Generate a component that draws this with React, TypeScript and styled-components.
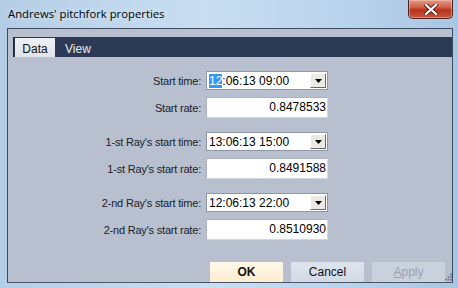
import React from "react";
import styled, { createGlobalStyle } from "styled-components";

const GlobalStyle = createGlobalStyle`
  html, body {
    margin: 0;
    padding: 0;
    width: 458px;
    height: 288px;
    overflow: hidden;
  }
  body {
    font-family: "Liberation Sans", Arial, sans-serif;
    font-size: 11px;
    color: #000;
  }
`;

const rows = [
  { label: "Start time:", kind: "combo", value: "12:06:13 09:00", highlight: true },
  { label: "Start rate:", kind: "rate", value: "0.8478533" },
  { label: "1-st Ray's start time:", kind: "combo", value: "13:06:13 15:00" },
  { label: "1-st Ray's start rate:", kind: "rate", value: "0.8491588" },
  { label: "2-nd Ray's start time:", kind: "combo", value: "12:06:13 22:00" },
  { label: "2-nd Ray's start rate:", kind: "rate", value: "0.8510930" }
];

export default function App() {
  return (
    <>
      <GlobalStyle />
      <Window>
        <TitleBar>
          <Title>Andrews' pitchfork properties</Title>
          <CloseButton>
            <svg width="14" height="11" viewBox="0 0 14 11">
              <path
                d="M2 1 L12 10 M12 1 L2 10"
                stroke="#5a1e18"
                strokeWidth="4"
                strokeLinecap="square"
              />
              <path
                d="M2 1 L12 10 M12 1 L2 10"
                stroke="#fff"
                strokeWidth="2.2"
                strokeLinecap="square"
              />
            </svg>
          </CloseButton>
        </TitleBar>
        <Client>
          <TabStrip>
            <Tab $active>Data</Tab>
            <Tab>View</Tab>
          </TabStrip>
          <Form>
            {rows.map((r, i) => (
              <Row key={i} $rate={r.kind === "rate"} $groupStart={i > 0 && i % 2 === 0}>
                <Label>{r.label}</Label>
                {r.kind === "combo" ? (
                  <Combo>
                    <ComboText>
                      {r.highlight ? (
                        <>
                          <Sel>12</Sel>
                          {r.value.slice(2)}
                        </>
                      ) : (
                        r.value
                      )}
                    </ComboText>
                    <DropButton>
                      <svg width="7" height="4" viewBox="0 0 7 4">
                        <path d="M0 0 H7 L3.5 4 Z" fill="#000" />
                      </svg>
                    </DropButton>
                  </Combo>
                ) : (
                  <RateBox>{r.value}</RateBox>
                )}
              </Row>
            ))}
          </Form>
          <ButtonBar>
            <Button $default>OK</Button>
            <Button>Cancel</Button>
            <Button $disabled>
              <u>A</u>pply
            </Button>
            <Grip>
              <svg width="8" height="8" viewBox="0 0 8 8">
                <g fill="#6f7c90">
                  <rect x="6" y="0" width="2" height="2" />
                  <rect x="3" y="3" width="2" height="2" />
                  <rect x="6" y="3" width="2" height="2" />
                  <rect x="0" y="6" width="2" height="2" />
                  <rect x="3" y="6" width="2" height="2" />
                  <rect x="6" y="6" width="2" height="2" />
                </g>
              </svg>
            </Grip>
          </ButtonBar>
        </Client>
      </Window>
    </>
  );
}

const Window = styled.div`
  width: 458px;
  height: 288px;
  display: flex;
  flex-direction: column;
  background: linear-gradient(90deg, #b4cde6 0%, #c9def1 45%, #b9d3ec 75%, #a9c6e2 100%);
  box-sizing: border-box;
  padding: 0 5px 5px 7px;
`;

const TitleBar = styled.div`
  height: 28px;
  display: flex;
  align-items: flex-start;
  justify-content: space-between;
  flex-shrink: 0;
`;

const Title = styled.div`
  font-family: "Open Sans", "Noto Sans", sans-serif;
  font-size: 11.3px;
  color: #000;
  margin-top: 6px;
  margin-left: 1px;
  text-shadow: 0 0 6px #e8f2fc;
`;

const CloseButton = styled.div`
  width: 45px;
  height: 19px;
  box-sizing: border-box;
  border: 1px solid #4e2420;
  border-top: none;
  border-radius: 0 0 5px 5px;
  background: linear-gradient(180deg, #e39a88 0%, #d05c45 42%, #b8321f 55%, #c9553b 100%);
  box-shadow: inset 0 0 0 1px rgba(255, 210, 200, 0.45);
  display: flex;
  align-items: center;
  justify-content: center;
`;

const Client = styled.div`
  flex: 1;
  display: flex;
  flex-direction: column;
  border: 1px solid #3e4c63;
  border-bottom-color: #4a566a;
  background: #b8c0cf;
  min-height: 0;
`;

const TabStrip = styled.div`
  margin-top: 8px;
  margin-left: 5px;
  height: 20px;
  background: #2c3a55;
  border-left: 1px solid #1a2438;
  display: flex;
  align-items: stretch;
  padding-left: 1px;
`;

const Tab = styled.div<{ $active?: boolean }>`
  width: ${p => (p.$active ? "40px" : "auto")};
  padding: ${p => (p.$active ? "2px 0 0" : "2px 0 0 10px")};
  margin-top: 1px;
  display: flex;
  align-items: center;
  justify-content: center;
  font-size: 12px;
  color: ${p => (p.$active ? "#111" : "#e8ecf2")};
  background: ${p => (p.$active ? "linear-gradient(180deg, #eef1f5 0%, #dfe4eb 100%)" : "transparent")};
`;

const Form = styled.div`
  flex: 1;
  display: flex;
  flex-direction: column;
  padding-top: 14px;
`;

const Row = styled.div<{ $rate?: boolean; $groupStart?: boolean }>`
  display: grid;
  grid-template-columns: 193px 122px;
  column-gap: 5px;
  align-items: center;
  margin-top: ${p => (p.$groupStart ? "14px" : p.$rate ? "7px" : "0")};
`;

const Label = styled.div`
  text-align: right;
  color: #1a202a;
  font-size: 11px;
  letter-spacing: -0.2px;
`;

const Combo = styled.div`
  height: 19px;
  box-sizing: border-box;
  background: #fff;
  border: 1px solid #8d97a6;
  display: flex;
  align-items: center;
`;

const ComboText = styled.div`
  flex: 1;
  padding-left: 2px;
  font-size: 12px;
  color: #000;
  white-space: nowrap;
`;

const Sel = styled.span`
  background: #3399ff;
  color: #fff;
`;

const DropButton = styled.div`
  width: 16px;
  height: 15px;
  margin-right: 1px;
  box-sizing: border-box;
  background: #ece9e4;
  border: 1px solid;
  border-color: #fff #6a6a6a #6a6a6a #fff;
  display: flex;
  align-items: center;
  justify-content: center;
`;

const RateBox = styled.div`
  height: 21px;
  box-sizing: border-box;
  background: #fff;
  border: 1px solid #d3d8e0;
  border-top-color: #a9b1bd;
  border-left-color: #a9b1bd;
  text-align: right;
  padding-right: 1px;
  line-height: 19px;
  font-size: 12px;
  color: #000;
`;

const ButtonBar = styled.div`
  display: flex;
  align-items: flex-end;
  justify-content: flex-end;
  gap: 8px;
  height: 20px;
`;

const Button = styled.div<{ $default?: boolean; $disabled?: boolean }>`
  width: 73px;
  height: 20px;
  box-sizing: border-box;
  display: flex;
  align-items: center;
  justify-content: center;
  font-size: 12px;
  font-weight: ${p => (p.$default ? "bold" : "normal")};
  color: ${p => (p.$disabled ? "#9aa3b0" : "#111")};
  background: ${p =>
    p.$default
      ? "linear-gradient(180deg, #fff9ea 0%, #fdecd0 100%)"
      : p.$disabled
      ? "#c9d1dc"
      : "linear-gradient(180deg, #dfe5ee 0%, #d2d9e4 100%)"};
  u {
    text-decoration: underline;
  }
`;

const Grip = styled.div`
  width: 7px;
  height: 20px;
  display: flex;
  align-items: flex-end;
  margin-left: -8px;
  padding-bottom: 1px;
`;
